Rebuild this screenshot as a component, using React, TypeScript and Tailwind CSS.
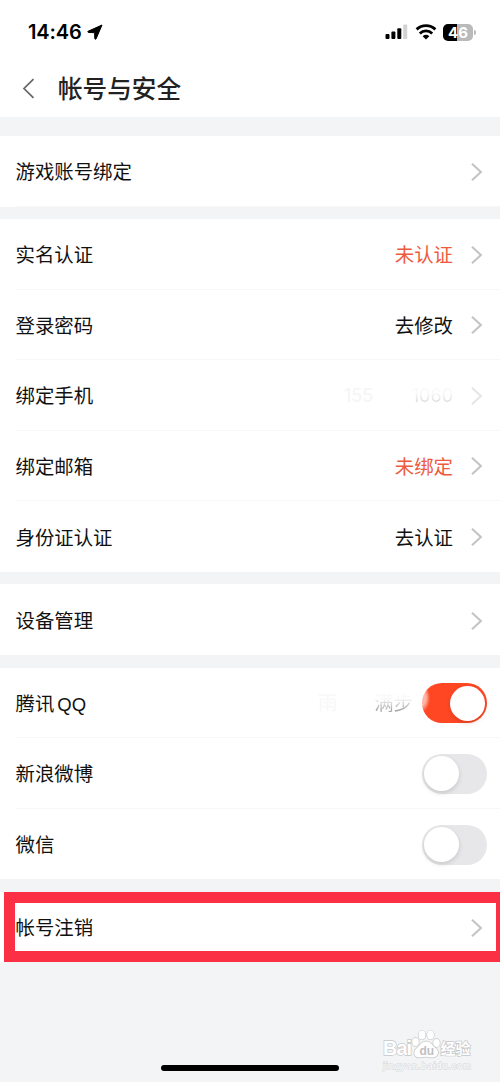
import { useState } from "react";
import type { ReactNode } from "react";
import clsx from "clsx";

type RowProps = {
  label: ReactNode;
  children?: ReactNode;
  last?: boolean;
};

function Chevron({ faded }: { faded?: boolean }) {
  return (
    <svg
      width="12"
      height="20"
      viewBox="0 0 12 20"
      fill="none"
      strokeWidth="2.1"
      className={clsx("mr-[4px] ml-[18px] shrink-0", faded ? "stroke-[#e6e6e6]" : "stroke-[#c4c4c4]")}
    >
      <path d="M1 1.8 9.9 10 1 18.2" />
    </svg>
  );
}

function Row({ label, children, last }: RowProps) {
  return (
    <div className="h-[70.5px] bg-white pl-[15.5px]">
      <div
        className={clsx(
          "flex h-full items-center justify-between pt-[2px] pr-[13px]",
          !last && "border-b border-[#f7f7f7]",
        )}
      >
        <span className="pt-[2px]">{label}</span>
        <div className="flex items-center">{children}</div>
      </div>
    </div>
  );
}

function Value({ children, alert }: { children: ReactNode; alert?: boolean }) {
  return <span className={clsx("pt-[2px]", alert && "text-[#ee5a3c]")}>{children}</span>;
}

function Toggle({ defaultOn = false, label }: { defaultOn?: boolean; label: string }) {
  const [on, setOn] = useState(defaultOn);

  return (
    <button
      type="button"
      role="switch"
      aria-checked={on}
      aria-label={label}
      onClick={() => setOn(!on)}
      className={clsx(
        "flex h-10 w-[65px] items-center rounded-full p-[2px]",
        on
          ? "justify-end bg-[#ff4724] bg-[radial-gradient(ellipse_8px_14px_at_0px_15px,#ffb5a5_50%,transparent_100%)]"
          : "justify-start bg-[#e7e7e9]",
      )}
    >
      <span className="size-[35px] rounded-full bg-white shadow-[0_2px_5px_rgba(0,0,0,0.14)]" />
    </button>
  );
}

function StatusBar() {
  return (
    <div className="flex h-[60px] items-center justify-between pr-[24px] pl-[28px] pt-[4px]">
      <div className="flex items-center gap-[5px] font-[Inter] text-[20px] font-semibold tracking-[-0.1px] text-black">
        <span>14:46</span>
        <svg width="16" height="16" viewBox="0 0 16 16">
          <path
            d="M15 1 1 7.3Q.4 8.2 1.5 8.5L7.6 8.6 7.8 14.6Q8.1 15.7 9 15Z"
            fill="black"
            stroke="black"
            strokeWidth="1"
            strokeLinejoin="round"
          />
        </svg>
      </div>
      <div className="flex items-center">
        <svg width="23" height="16" viewBox="0 0 23 16">
          <rect x="0.5" y="10" width="4" height="5" rx="1" />
          <rect x="6.4" y="7.5" width="4" height="7.5" rx="1" />
          <rect x="12.3" y="4.2" width="4" height="10.8" rx="1" />
          <rect x="18.2" y="0.5" width="4" height="14.5" rx="1" fill="#d2d2d2" />
        </svg>
        <svg width="22" height="16" viewBox="0 0 22 16" className="ml-[7px]" fill="none" stroke="black" strokeWidth="2.8">
          <path d="M1.6 5.4C7 .4 15 .4 20.4 5.4" />
          <path d="M4.8 9.5C8.3 6 13.7 6 17.2 9.5" />
          <path d="M11 15.4 7.6 12.3Q11 9.4 14.4 12.3Z" fill="black" stroke="none" />
        </svg>
        <div className="ml-[6px] flex h-[17px] w-[30px] items-center justify-center rounded-[5px] bg-[linear-gradient(90deg,black_46%,#bababa_46%)] font-[Inter] text-[15px] font-bold text-white">
          46
        </div>
        <div className="ml-px h-[5px] w-[2px] rounded-r-full bg-[#bababa]" />
      </div>
    </div>
  );
}

function Watermark() {
  return (
    <svg
      width="96"
      height="46"
      viewBox="0 0 96 46"
      className="absolute right-[24px] bottom-[9px]"
      fill="white"
      stroke="#c6c7c9"
      strokeWidth="1.4"
      paintOrder="stroke"
    >
      <text x="3" y="28" fontFamily="Liberation Sans" fontSize="20" fontWeight="bold" textLength="29">
        Bai
      </text>
      <ellipse cx="35.5" cy="15" rx="3.3" ry="4" />
      <ellipse cx="42" cy="8" rx="3.4" ry="4.4" />
      <ellipse cx="50.5" cy="8" rx="3.4" ry="4.4" />
      <ellipse cx="56.5" cy="16" rx="3.3" ry="4" />
      <path d="M46 14.5C41 14.5 40 19 36.5 21.5C32 26 35 31 40 30.5Q46 29 51 30.5C58 31 60 25 56 21.5C52 18 51 14.5 46 14.5Z" />
      <text x="39.5" y="28" fontFamily="Liberation Sans" fontSize="12" fontWeight="bold" fill="#bfc0c2" stroke="none">
        du
      </text>
      <text x="60.5" y="26.5" fontFamily="Noto Sans CJK SC" fontSize="15" fontWeight="bold" textLength="30">
        经验
      </text>
      <text x="3" y="41.5" fontFamily="Liberation Sans" fontSize="9.5" textLength="88" strokeWidth="1" stroke="#d3d4d6">
        jingyan.baidu.com
      </text>
    </svg>
  );
}

export default function App() {
  return (
    <div className="relative flex h-[1082px] w-[500px] flex-col overflow-hidden bg-[#f2f4f6] font-['Liberation_Sans','Noto_Sans_CJK_SC',sans-serif] text-[19.4px] leading-none text-[#111]">
      <header className="h-[117px] shrink-0 bg-white">
        <StatusBar />
        <div className="flex h-[57px] items-center pl-[22px]">
          <svg width="13" height="21" viewBox="0 0 13 21" fill="none" stroke="#666" strokeWidth="1.7">
            <path d="M11.5 1.2 2 10.5 11.5 19.8" />
          </svg>
          <h1 className="ml-[23px] pt-[4px] text-[24.6px] font-medium text-[#222]">帐号与安全</h1>
        </div>
      </header>

      <main className="flex flex-col gap-[12.7px] pt-[19px]">
        <section>
          <Row label="游戏账号绑定">
            <Chevron />
          </Row>
        </section>

        <section>
          <Row label="实名认证">
            <Value alert>未认证</Value>
            <Chevron />
          </Row>
          <Row label="登录密码">
            <Value>去修改</Value>
            <Chevron />
          </Row>
          <Row label="绑定手机">
            <span className="flex w-[109px] justify-between font-[Inter] text-[18px] leading-[24px]">
              <span className="text-[#f5f5f5]">155</span>
              <span className="bg-linear-to-b from-[#f8f8f8] from-40% to-[#d0d0d0] to-90% bg-clip-text text-transparent">
                1060
              </span>
            </span>
            <Chevron faded />
          </Row>
          <Row label="绑定邮箱">
            <Value alert>未绑定</Value>
            <Chevron />
          </Row>
          <Row label="身份证认证" last>
            <Value>去认证</Value>
            <Chevron />
          </Row>
        </section>

        <section>
          <Row label="设备管理" last>
            <Chevron />
          </Row>
        </section>

        <section>
          <Row
            label={
              <>
                腾讯<span className="ml-[3px] text-[18.5px]">QQ</span>
              </>
            }
          >
            <span className="mr-[9px] flex w-[95px] justify-between leading-[28px]">
              <span className="text-[#f8f8f8]">雨</span>
              <span className="bg-linear-to-b from-[#f8f8f8] from-35% to-[#999] to-85% bg-clip-text text-transparent">
                满步
              </span>
            </span>
            <Toggle defaultOn label="腾讯 QQ" />
          </Row>
          <Row label="新浪微博">
            <Toggle label="新浪微博" />
          </Row>
          <Row label="微信" last>
            <Toggle label="微信" />
          </Row>
        </section>

        <section className="relative">
          <Row label="帐号注销" last>
            <Chevron />
          </Row>
          <div className="pointer-events-none absolute top-0 -right-[7px] bottom-0 left-[4px] border-[11px] border-[#fb3044]" />
        </section>
      </main>

      <Watermark />
      <div className="absolute bottom-[11px] left-[161px] h-[6px] w-[178px] rounded-full bg-black" />
    </div>
  );
}
